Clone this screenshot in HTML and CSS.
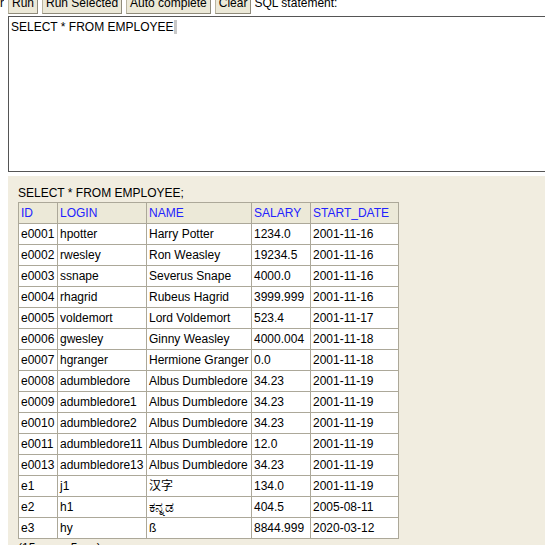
FILE: index.html
```html
<!DOCTYPE html>
<html>
<head>
<meta charset="utf-8">
<link rel="stylesheet" href="styles.css">
</head>
<body>
<div class="toolbar">
  <span class="cut">r</span>
  <button class="btn">Run</button>
  <button class="btn">Run Selected</button>
  <button class="btn">Auto complete</button>
  <button class="btn">Clear</button>
  <span class="label">SQL statement:</span>
</div>
<div class="editor">SELECT * FROM EMPLOYEE<span class="caret"></span></div>
<div class="result">
  <div class="stmt">SELECT * FROM EMPLOYEE;</div>
  <table class="grid">
    <colgroup>
      <col class="c-id"><col class="c-login"><col class="c-name"><col class="c-salary"><col class="c-date">
    </colgroup>
    <thead>
      <tr><th>ID</th><th>LOGIN</th><th>NAME</th><th>SALARY</th><th>START_DATE</th></tr>
    </thead>
    <tbody>
      <tr><td>e0001</td><td>hpotter</td><td>Harry Potter</td><td>1234.0</td><td>2001-11-16</td></tr>
      <tr><td>e0002</td><td>rwesley</td><td>Ron Weasley</td><td>19234.5</td><td>2001-11-16</td></tr>
      <tr><td>e0003</td><td>ssnape</td><td>Severus Snape</td><td>4000.0</td><td>2001-11-16</td></tr>
      <tr><td>e0004</td><td>rhagrid</td><td>Rubeus Hagrid</td><td>3999.999</td><td>2001-11-16</td></tr>
      <tr><td>e0005</td><td>voldemort</td><td>Lord Voldemort</td><td>523.4</td><td>2001-11-17</td></tr>
      <tr><td>e0006</td><td>gwesley</td><td>Ginny Weasley</td><td>4000.004</td><td>2001-11-18</td></tr>
      <tr><td>e0007</td><td>hgranger</td><td>Hermione Granger</td><td>0.0</td><td>2001-11-18</td></tr>
      <tr><td>e0008</td><td>adumbledore</td><td>Albus Dumbledore</td><td>34.23</td><td>2001-11-19</td></tr>
      <tr><td>e0009</td><td>adumbledore1</td><td>Albus Dumbledore</td><td>34.23</td><td>2001-11-19</td></tr>
      <tr><td>e0010</td><td>adumbledore2</td><td>Albus Dumbledore</td><td>34.23</td><td>2001-11-19</td></tr>
      <tr><td>e0011</td><td>adumbledore11</td><td>Albus Dumbledore</td><td>12.0</td><td>2001-11-19</td></tr>
      <tr><td>e0013</td><td>adumbledore13</td><td>Albus Dumbledore</td><td>34.23</td><td>2001-11-19</td></tr>
      <tr><td>e1</td><td>j1</td><td>汉字</td><td>134.0</td><td>2001-11-19</td></tr>
      <tr><td>e2</td><td>h1</td><td class="kn">ಕನ್ನಡ</td><td>404.5</td><td>2005-08-11</td></tr>
      <tr><td>e3</td><td>hy</td><td>ß</td><td>8844.999</td><td>2020-03-12</td></tr>
    </tbody>
  </table>
  <div class="summary">(15 rows, 5 ms)</div>
</div>
</body>
</html>
```
FILE: styles.css
```css
html, body {
  margin: 0;
  padding: 0;
  overflow: hidden;
  background: #ffffff;
}
body {
  font-family: "Liberation Sans", Arial, "Noto Sans CJK SC", "Noto Sans", sans-serif;
  font-size: 12px;
  color: #000;
  width: 620px;
}
.toolbar {
  display: flex;
  align-items: center;
  gap: 4px;
  margin-top: -8px;
  height: 22px;
  white-space: nowrap;
}
.cut {
  width: 4px;
  overflow: hidden;
  line-height: 14px;
}
.btn {
  font-family: inherit;
  font-size: 12px;
  line-height: 14px;
  height: 21px;
  padding: 0 3px;
  margin: 0;
  background: #ece9d8;
  border: 1px solid #b9b4a0;
  border-bottom-color: #8f8b7b;
  border-right-color: #8f8b7b;
  color: #000;
}
.label {
  line-height: 14px;
  margin-left: -1px;
}
.editor {
  margin: 2px 0 0 8px;
  width: 600px;
  height: 156px;
  border: 1px solid #555555;
  padding: 3px 2px;
  line-height: 15px;
  box-sizing: border-box;
}
.caret {
  display: inline-block;
  width: 3px;
  height: 14px;
  vertical-align: -3px;
  background: #c8c8c8;
}
.result {
  margin: 4px 0 0 8px;
  background: #f1ede0;
  padding: 10px;
}
.stmt {
  line-height: 14px;
  margin-bottom: 2px;
}
.grid {
  border-collapse: collapse;
  table-layout: fixed;
  width: 380px;
  border: 1px solid #aca899;
  background: #ffffff;
}
.c-id { width: 39px; }
.c-login { width: 89px; }
.c-name { width: 105px; }
.c-salary { width: 59px; }
.c-date { width: 88px; }
.grid th, .grid td {
  border: 1px solid #aca899;
  padding: 3px 2px;
  line-height: 14px;
  height: 14px;
  text-align: left;
  font-weight: normal;
  white-space: nowrap;
  overflow: hidden;
}
.grid th {
  background: #ece9d8;
  color: #2222ff;
}
.grid td.kn {
  font-size: 14px;
}
.summary {
  line-height: 14px;
  margin-top: 2px;
}
```
